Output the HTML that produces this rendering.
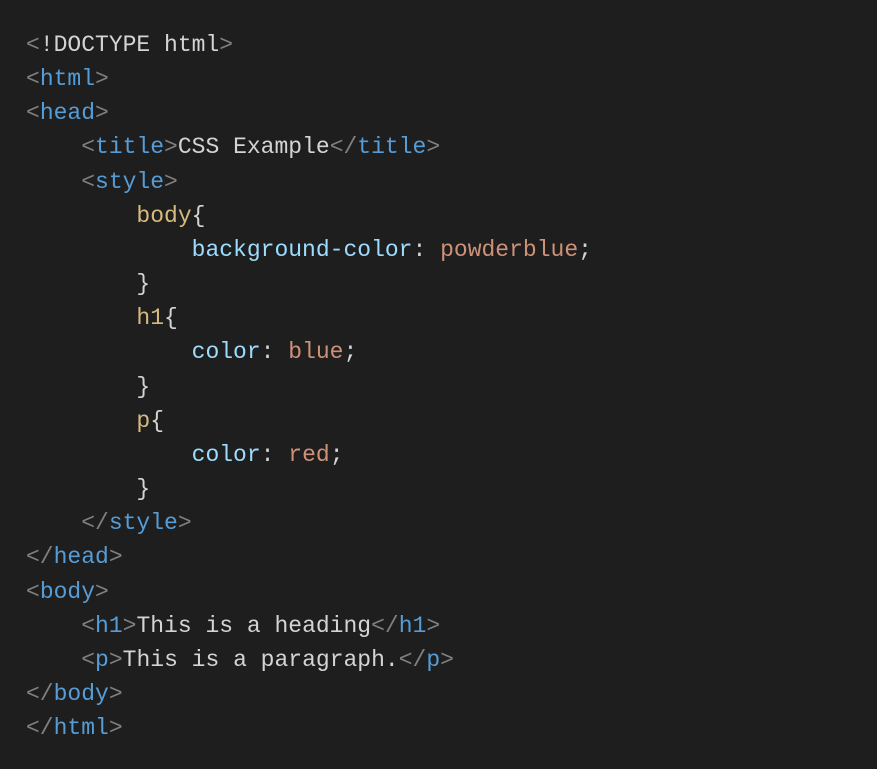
<!DOCTYPE html>
<html><head><style>
html,body{margin:0;padding:0;background:#1e1e1e;width:877px;height:769px;overflow:hidden}
pre{margin:0;padding:28px 0 0 26px;font-family:"Liberation Mono",monospace;font-size:23px;line-height:34.15px;color:#d4d4d4}
.b{color:#808080}.t{color:#569cd6}.s{color:#d7ba7d}.p{color:#9cdcfe}.v{color:#ce9178}
</style></head><body><pre><span class="b">&lt;</span>!DOCTYPE html<span class="b">&gt;</span>
<span class="b">&lt;</span><span class="t">html</span><span class="b">&gt;</span>
<span class="b">&lt;</span><span class="t">head</span><span class="b">&gt;</span>
    <span class="b">&lt;</span><span class="t">title</span><span class="b">&gt;</span>CSS Example<span class="b">&lt;/</span><span class="t">title</span><span class="b">&gt;</span>
    <span class="b">&lt;</span><span class="t">style</span><span class="b">&gt;</span>
        <span class="s">body</span>{
            <span class="p">background-color</span>: <span class="v">powderblue</span>;
        }
        <span class="s">h1</span>{
            <span class="p">color</span>: <span class="v">blue</span>;
        }
        <span class="s">p</span>{
            <span class="p">color</span>: <span class="v">red</span>;
        }
    <span class="b">&lt;/</span><span class="t">style</span><span class="b">&gt;</span>
<span class="b">&lt;/</span><span class="t">head</span><span class="b">&gt;</span>
<span class="b">&lt;</span><span class="t">body</span><span class="b">&gt;</span>
    <span class="b">&lt;</span><span class="t">h1</span><span class="b">&gt;</span>This is a heading<span class="b">&lt;/</span><span class="t">h1</span><span class="b">&gt;</span>
    <span class="b">&lt;</span><span class="t">p</span><span class="b">&gt;</span>This is a paragraph.<span class="b">&lt;/</span><span class="t">p</span><span class="b">&gt;</span>
<span class="b">&lt;/</span><span class="t">body</span><span class="b">&gt;</span>
<span class="b">&lt;/</span><span class="t">html</span><span class="b">&gt;</span></pre></body></html>
